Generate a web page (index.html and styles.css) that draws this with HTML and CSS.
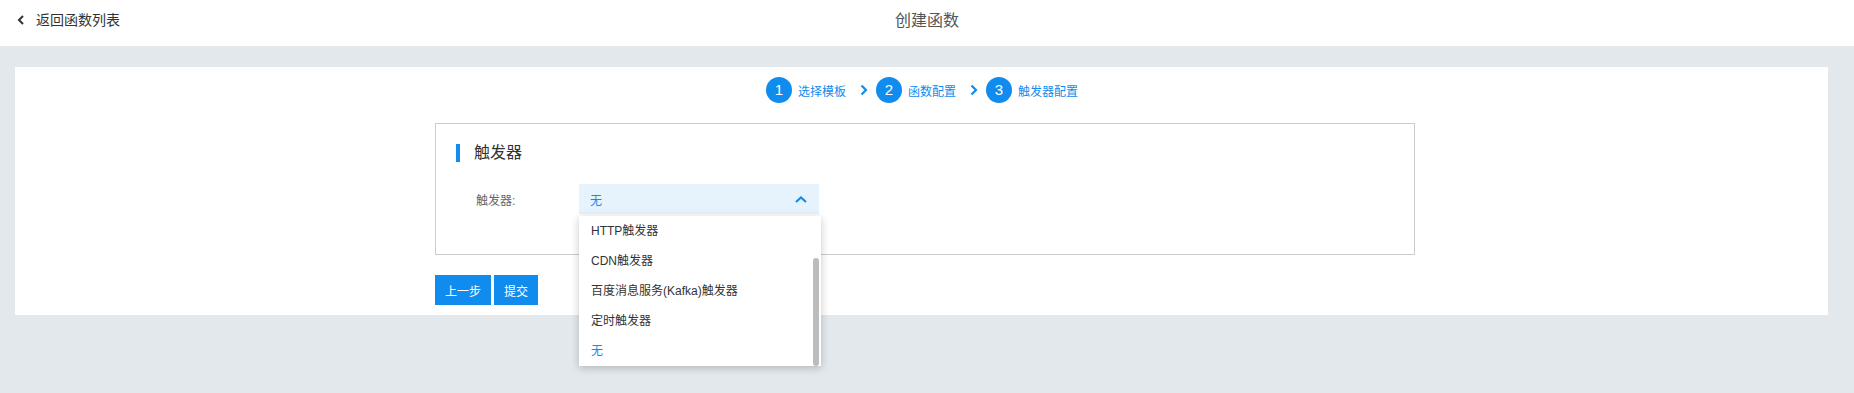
FILE: index.html
```html
<!DOCTYPE html>
<html lang="zh-CN">
<head>
    <meta charset="UTF-8">
    <meta name="viewport" content="width=device-width, initial-scale=1.0">
    <title>创建函数</title>
    <link rel="stylesheet" href="styles.css">
</head>
<body>
    <div class="header">
        <a href="#" class="back-link">
            <svg class="back-icon" width="8" height="10" viewBox="0 0 8 10"><path d="M6 1 L2 5 L6 9" fill="none" stroke="#333" stroke-width="2"/></svg>
            返回函数列表
        </a>
        <div class="page-title">创建函数</div>
        <div></div>
    </div>

    <div class="main">
        <div class="card">
            <div class="wizard">
                <ol class="steps">
                    <li class="step"><span class="step-num">1</span><span class="step-text">选择模板</span></li>
                    <li class="step-arrow"><svg width="8" height="12" viewBox="0 0 8 12"><path d="M1.5 1.5 L6 6 L1.5 10.5" fill="none" stroke="#108cee" stroke-width="2.2"/></svg></li>
                    <li class="step"><span class="step-num">2</span><span class="step-text">函数配置</span></li>
                    <li class="step-arrow"><svg width="8" height="12" viewBox="0 0 8 12"><path d="M1.5 1.5 L6 6 L1.5 10.5" fill="none" stroke="#108cee" stroke-width="2.2"/></svg></li>
                    <li class="step"><span class="step-num">3</span><span class="step-text">触发器配置</span></li>
                </ol>

                <div class="form-box">
                    <h2 class="section-title">触发器</h2>
                    <div class="form-row">
                        <label class="form-label">触发器:</label>
                        <div class="select">
                            <div class="select-value">
                                <span>无</span>
                                <svg width="12" height="7" viewBox="0 0 12 7"><path d="M1 6 L6 1.5 L11 6" fill="none" stroke="#108cee" stroke-width="2.2"/></svg>
                            </div>
                            <ul class="select-menu">
                                <li class="select-option">HTTP触发器</li>
                                <li class="select-option">CDN触发器</li>
                                <li class="select-option">百度消息服务(Kafka)触发器</li>
                                <li class="select-option">定时触发器</li>
                                <li class="select-option selected">无</li>
                            </ul>
                            <div class="menu-scrollbar"></div>
                        </div>
                    </div>
                </div>

                <div class="actions">
                    <button type="button" class="btn">上一步</button>
                    <button type="button" class="btn">提交</button>
                </div>
            </div>
        </div>
    </div>
</body>
</html>
```

FILE: styles.css
```css
body {
    font-family: "Liberation Sans", "Noto Sans CJK SC", sans-serif;
    background-color: #e3e8ec;
    margin: 0;
    color: #333;
    min-height: 393px;
}

.header {
    background-color: white;
    height: 46px;
    display: grid;
    grid-template-columns: 1fr auto 1fr;
    align-items: center;
}

.back-link {
    display: flex;
    align-items: center;
    padding-left: 17px;
    font-size: 14px;
    color: #333;
    text-decoration: none;
    line-height: 20px;
    margin-top: -6px;
}

.back-icon {
    margin-right: 11px;
}

.page-title {
    font-size: 16px;
    color: #555;
    line-height: 22px;
    margin-top: -4px;
}

.main {
    padding: 21px 26px 0 15px;
}

.card {
    background-color: white;
    padding: 10px 0 10px 420px;
}

.wizard {
    width: 980px;
}

.steps {
    list-style-type: none;
    margin: 0;
    padding: 0 6px 0 0;
    display: flex;
    justify-content: center;
    align-items: center;
    height: 26px;
}

.step {
    display: flex;
    align-items: center;
}

.step-num {
    width: 26px;
    height: 26px;
    border-radius: 50%;
    background-color: #108cee;
    color: white;
    font-size: 15px;
    line-height: 26px;
    text-align: center;
}

.step-text {
    margin-left: 6px;
    font-size: 12px;
    color: #108cee;
}

.step-arrow {
    display: flex;
    margin: 0 8px 0 14px;
}

.form-box {
    margin-top: 20px;
    border: 1px solid #cccccc;
    box-sizing: border-box;
    height: 132px;
    padding: 20px 0 0 20px;
}

.section-title {
    margin: 0;
    height: 18px;
    border-left: 4px solid #108cee;
    padding-left: 14px;
    font-size: 16px;
    font-weight: normal;
    line-height: 18px;
    color: #333;
}

.form-row {
    margin-top: 22px;
    display: flex;
    align-items: center;
}

.form-label {
    width: 103px;
    padding-left: 20px;
    font-size: 12px;
    color: #666;
}

.select {
    position: relative;
    width: 240px;
}

.select-value {
    height: 30px;
    background-color: #e6f2fc;
    display: flex;
    justify-content: space-between;
    align-items: center;
    padding: 0 12px 0 11px;
    font-size: 12px;
    color: #108cee;
}

.select-menu {
    position: absolute;
    top: 32px;
    left: 0;
    width: 242px;
    margin: 0;
    padding: 0;
    list-style-type: none;
    background-color: white;
    box-shadow: 0 2px 8px rgba(0, 0, 0, 0.22);
    z-index: 2;
}

.select-option {
    height: 30px;
    line-height: 30px;
    padding-left: 12px;
    font-size: 12px;
    color: #333;
}

.select-option.selected {
    color: #108cee;
}

.menu-scrollbar {
    position: absolute;
    top: 74px;
    left: 234px;
    width: 6px;
    height: 108px;
    border-radius: 3px;
    background-color: #bcbcbc;
    z-index: 3;
}

.actions {
    margin-top: 20px;
    display: flex;
    gap: 3px;
}

.btn {
    height: 30px;
    padding: 0 10px;
    border: none;
    background-color: #108cee;
    color: white;
    font-family: inherit;
    font-size: 12px;
}
```
